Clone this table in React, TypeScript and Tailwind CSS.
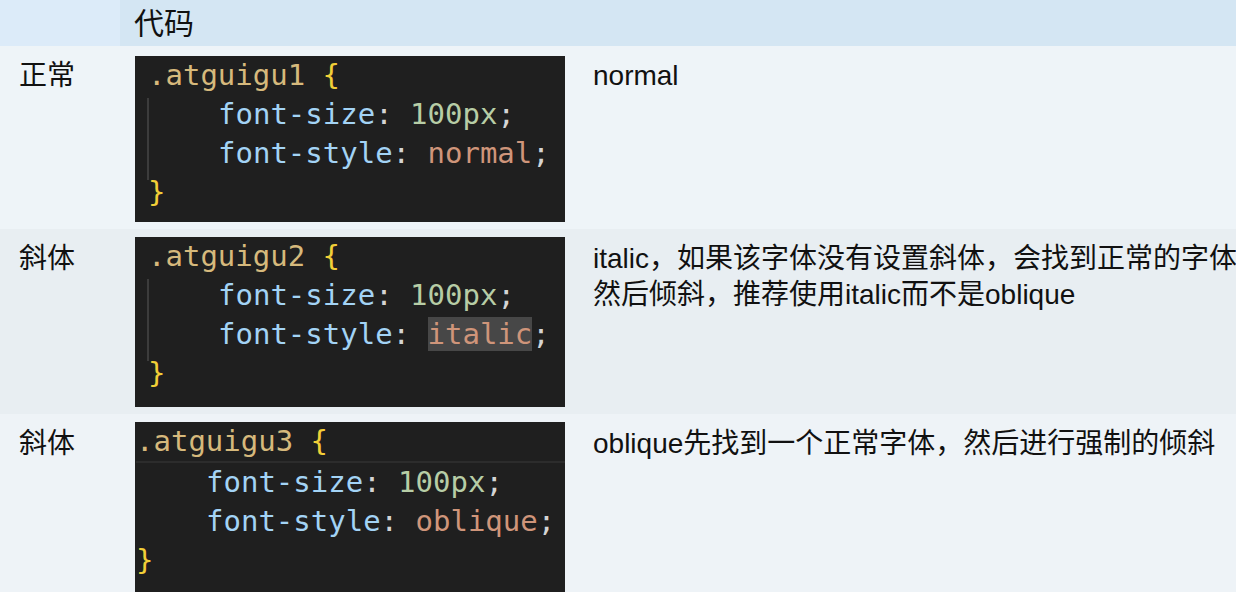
import * as React from 'react';

const sans = { fontFamily: '"Liberation Sans", "Noto Sans CJK SC", sans-serif' };
const mono = { fontFamily: '"DejaVu Sans Mono", "Liberation Mono", monospace' };

interface CodeProps {
    name: string;
    value: string;
    shift?: boolean;
    highlight?: boolean;
    guide?: boolean;
    currentLine?: boolean;
}

const CodeShot: React.FunctionComponent<CodeProps> = ({ name, value, shift, highlight, guide, currentLine }) => {
    return (
        <div
            className={`relative h-full w-[430px] bg-[#1f1f1f] text-[29px] leading-[39px] ${shift ? 'pl-[1px]' : 'pl-[13px]'}`}
            style={mono}
        >
            {guide && <div className="absolute left-[12px] top-[42px] h-[82px] w-[2px] bg-[#3c3c3c]" />}
            <div className={currentLine ? 'border-b-2 border-[#2c2c2c]' : ''}>
                <span className="text-[#d6b97c]">{name}</span>
                <span className="text-[#d4d4d4]"> </span>
                <span className="text-[#f2cf38]">{'{'}</span>
            </div>
            <div className="pl-[70px] whitespace-pre">
                <span className="text-[#a3d3f5]">font-size</span>
                <span className="text-[#d4d4d4]">: </span>
                <span className="text-[#b7cda6]">100px</span>
                <span className="text-[#d4d4d4]">;</span>
            </div>
            <div className="pl-[70px] whitespace-pre">
                <span className="text-[#a3d3f5]">font-style</span>
                <span className="text-[#d4d4d4]">: </span>
                <span className={`text-[#cf957a] ${highlight ? 'bg-[#474747]' : ''}`}>{value}</span>
                <span className="text-[#d4d4d4]">;</span>
            </div>
            <div>
                <span className="text-[#f2cf38]">{'}'}</span>
            </div>
        </div>
    );
};

const rows = [
    {
        label: '正常',
        code: { name: '.atguigu1', value: 'normal', guide: true },
        desc: ['normal'],
        bg: 'bg-[#eef4f8]',
        height: 'h-[183px]',
        pad: 'pt-[10px] pb-[7px]',
    },
    {
        label: '斜体',
        code: { name: '.atguigu2', value: 'italic', guide: true, highlight: true },
        desc: ['italic，如果该字体没有设置斜体，会找到正常的字体', '然后倾斜，推荐使用italic而不是oblique'],
        bg: 'bg-[#e8eef2]',
        height: 'h-[185px]',
        pad: 'pt-[8px] pb-[7px]',
    },
    {
        label: '斜体',
        code: { name: '.atguigu3', value: 'oblique', shift: true, currentLine: true },
        desc: ['oblique先找到一个正常字体，然后进行强制的倾斜'],
        bg: 'bg-[#eef3f7]',
        height: 'h-[178px]',
        pad: 'pt-[8px] pb-0',
    },
];

export default function App() {
    return (
        <div className="h-[592px] w-full overflow-hidden bg-[#eef4f7] text-[#111]" style={sans}>
            {/* header */}
            <div className="grid h-[46px] grid-cols-[120px_1fr]">
                <div className="bg-[#dcebf9]" />
                <div className="flex items-center bg-[#d4e6f3] pl-[14px] text-[30px]">代码</div>
            </div>
            {rows.map((row, i) => (
                <div key={i} className={`grid grid-cols-[120px_460px_1fr] ${row.bg} ${row.height}`}>
                    <div className="pl-[19px] pt-[12px] text-[28px] leading-[36px]">{row.label}</div>
                    <div className={`pl-[15px] ${row.pad}`}>
                        <CodeShot {...row.code} />
                    </div>
                    <div className="pl-[13px] pt-[12px] text-[28px] leading-[36px]">
                        {row.desc.map((line) => (
                            <div key={line} className="whitespace-nowrap">
                                {line}
                            </div>
                        ))}
                    </div>
                </div>
            ))}
        </div>
    );
}
